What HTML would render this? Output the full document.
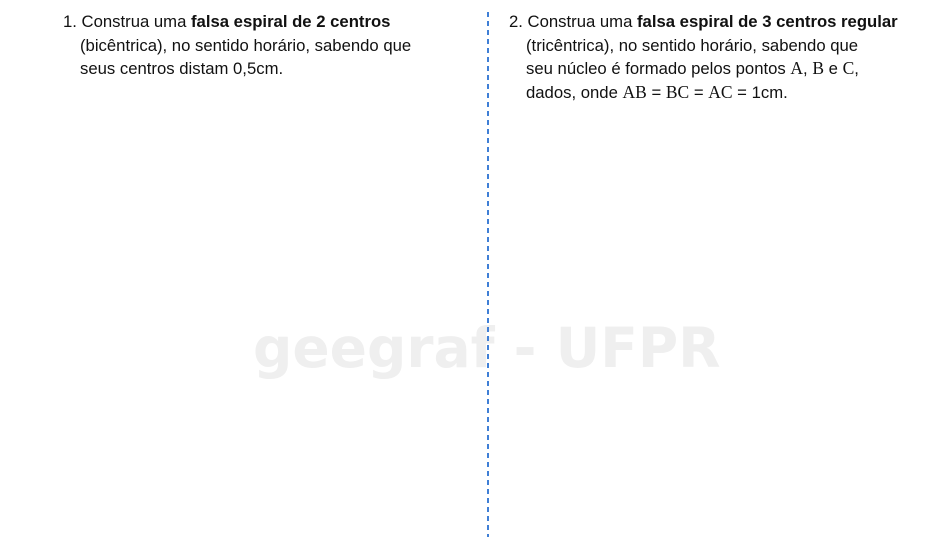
<!DOCTYPE html>
<html><head><meta charset="utf-8"><style>
body{margin:0;width:950px;height:540px;background:#fff;position:relative;overflow:hidden;font-family:"Liberation Sans",sans-serif;color:#111}
.p{position:absolute;font-size:16.7px;line-height:23.5px;white-space:nowrap}
.p .i{padding-left:17px}
b{font-weight:bold}
.s{font-family:"Liberation Serif",serif;font-size:17.5px}
.line{position:absolute;left:487px;top:12px;width:2px;height:525px;background:repeating-linear-gradient(to bottom,#3f7fd6 0 5px,transparent 5px 9px)}
.wm{position:absolute;left:253px;top:316px;font-family:"DejaVu Sans",sans-serif;font-weight:bold;font-size:55px;color:#efefef;white-space:nowrap}
</style></head><body>
<div class="wm">geegraf - UFPR</div>
<div class="line"></div>
<div class="p" style="left:63px;top:10px">
<div>1. Construa uma <b>falsa espiral de 2 centros</b></div>
<div class="i">(bicêntrica), no sentido horário, sabendo que</div>
<div class="i">seus centros distam 0,5cm.</div>
</div>
<div class="p" style="left:509px;top:10px">
<div>2. Construa uma <b>falsa espiral de 3 centros regular</b></div>
<div class="i">(tricêntrica), no sentido horário, sabendo que</div>
<div class="i">seu núcleo é formado pelos pontos <span class="s">A</span>, <span class="s">B</span> e <span class="s">C</span>,</div>
<div class="i">dados, onde <span class="s">AB</span> = <span class="s">BC</span> = <span class="s">AC</span> = 1cm.</div>
</div>
</body></html>
